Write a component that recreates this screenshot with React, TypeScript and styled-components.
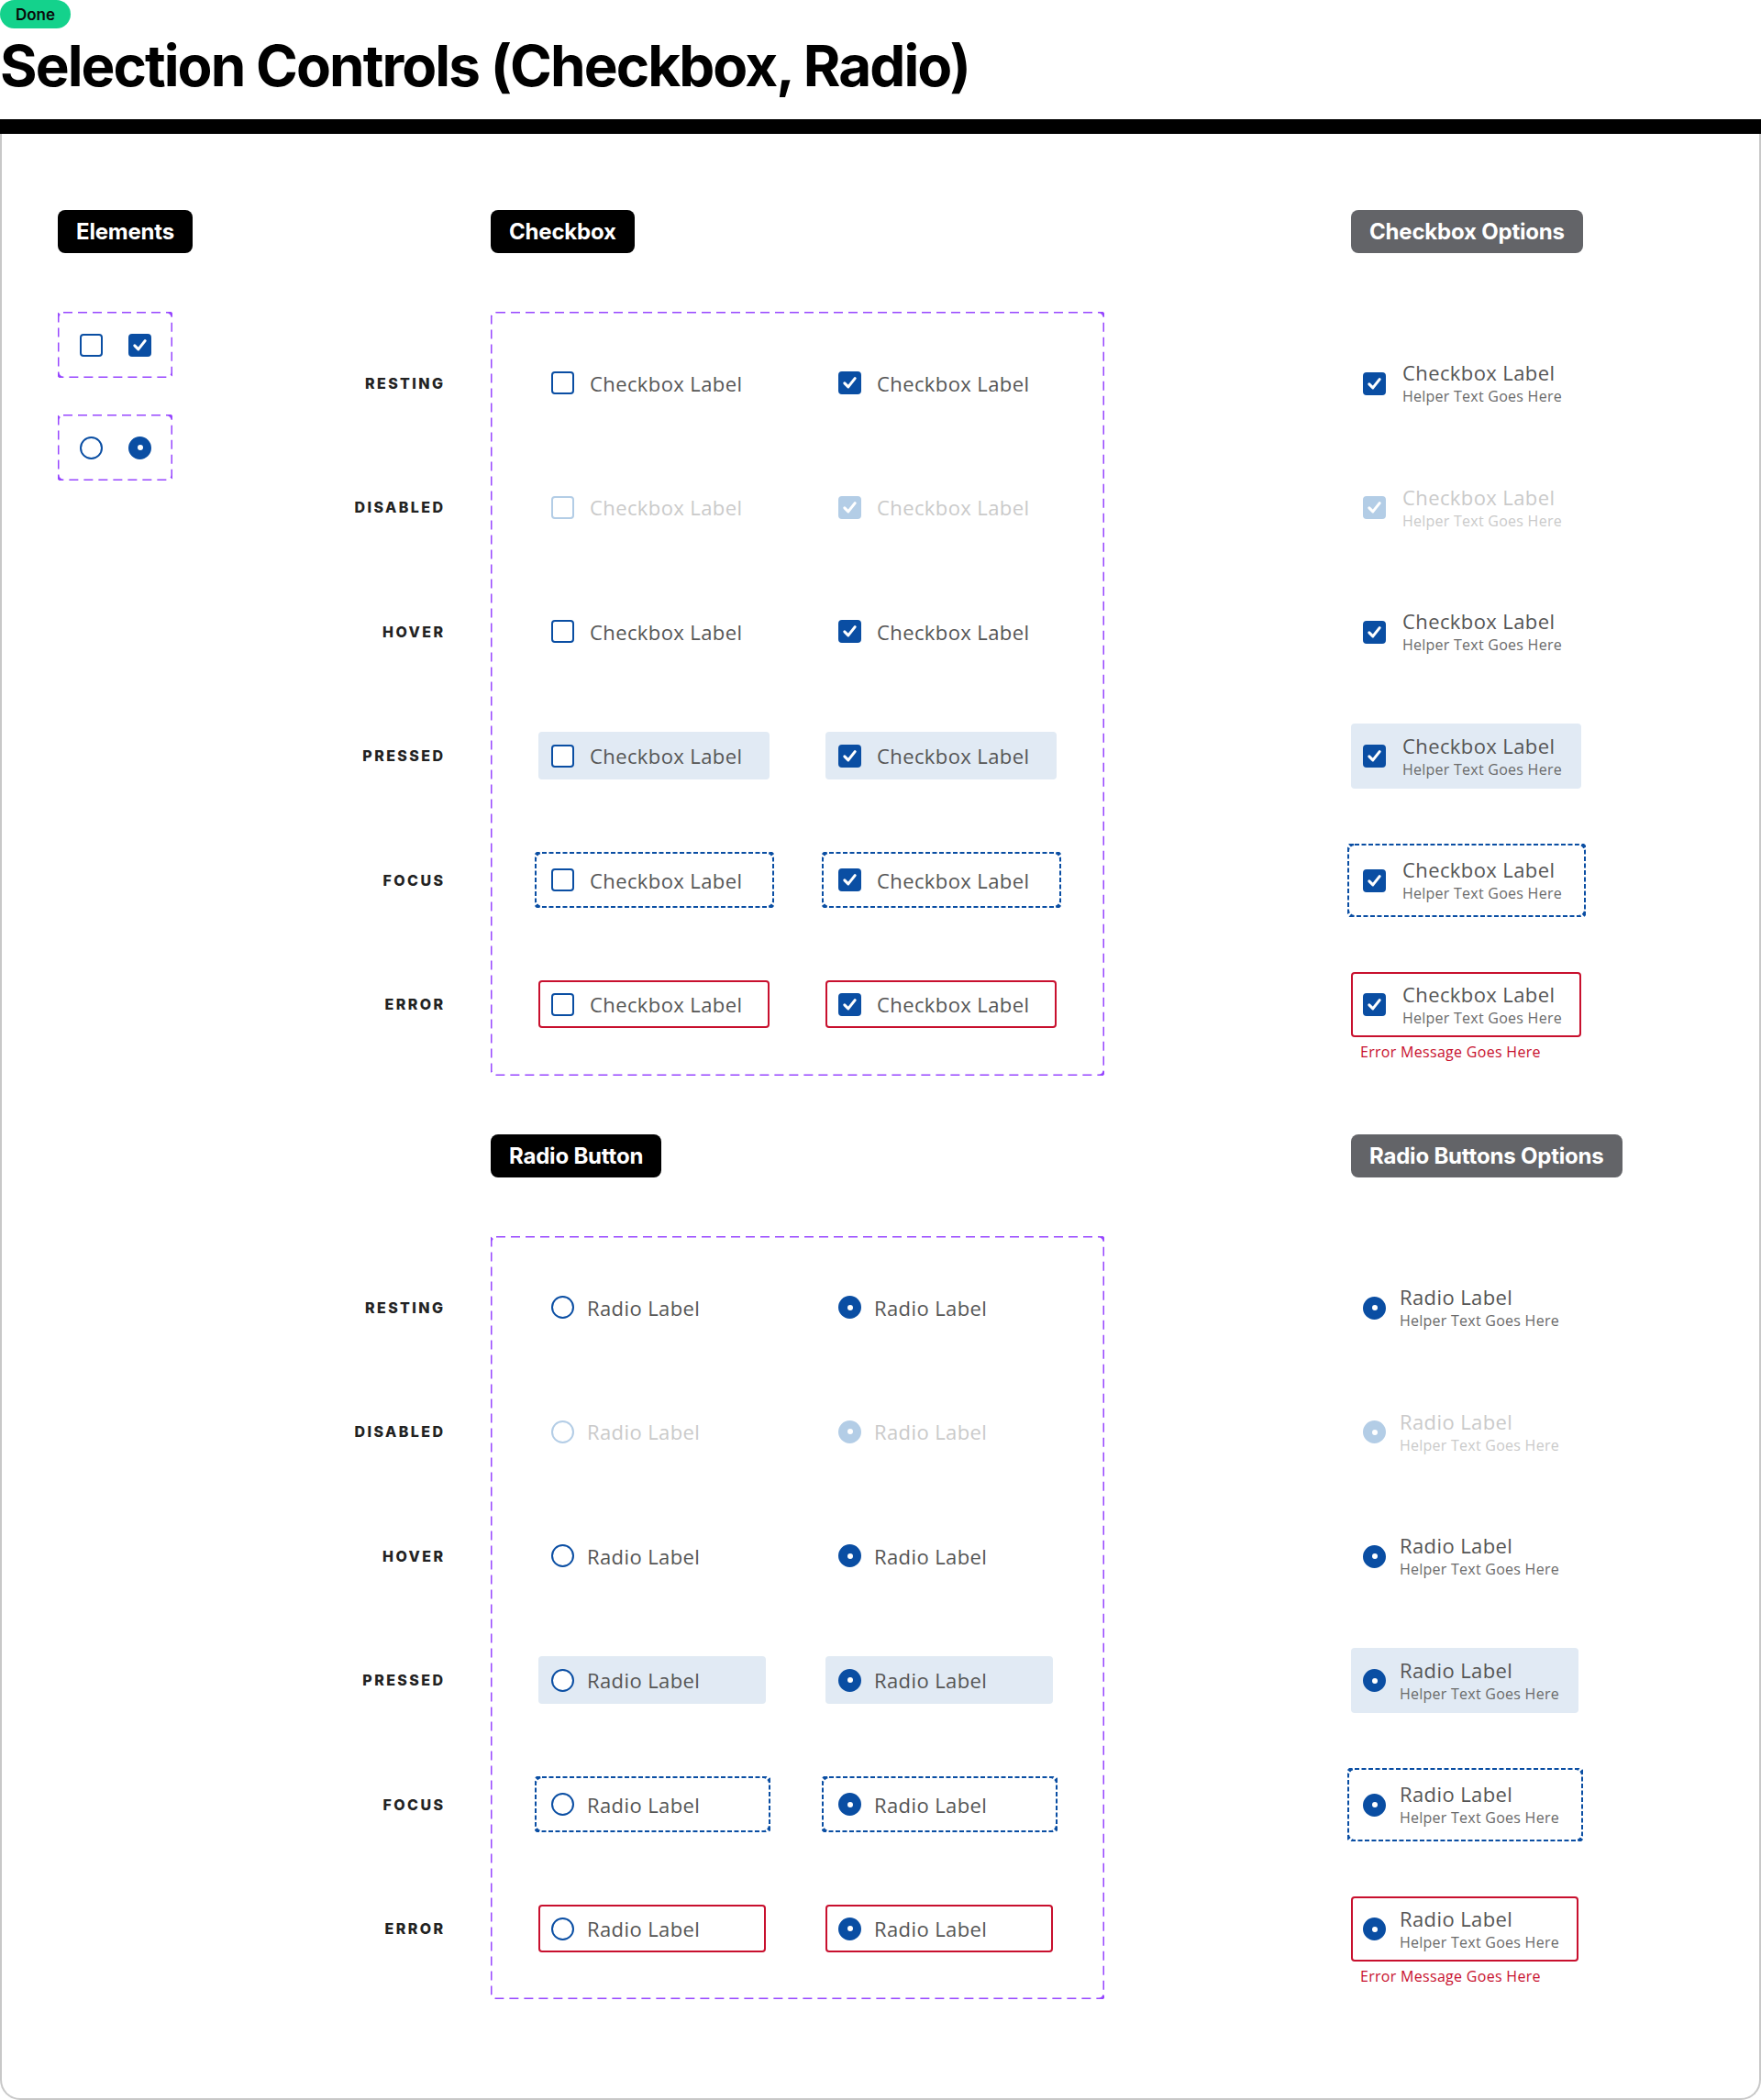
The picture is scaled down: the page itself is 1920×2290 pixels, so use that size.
import React from "react";
import styled, { createGlobalStyle, css } from "styled-components";

const BLUE = "#0a4ea3";
const BLUE_DIS = "#b3cde6";
const RED = "#c8102e";
const PURPLE = "#9747ff";
const TEXT = "#555555";
const HELPER = "#6a6a6a";
const TEXT_DIS = "#cacaca";
const PRESSED_BG = "#e1eaf4";

const dashed = (color: string, w: number, dash: number, gap: number, r: number) =>
  `url("data:image/svg+xml,${encodeURIComponent(
    `<svg xmlns='http://www.w3.org/2000/svg' width='100%' height='100%'><rect width='100%' height='100%' fill='none' rx='${r}' ry='${r}' stroke='${color}' stroke-width='${
      w * 2
    }' stroke-dasharray='${dash} ${gap}'/></svg>`
  )}")`;

const PURPLE_DASH = dashed(PURPLE, 1.5, 10, 6, 6);
const FOCUS_DASH = dashed(BLUE, 2, 5, 2.5, 8);

type State = "resting" | "disabled" | "hover" | "pressed" | "focus" | "error";

const STATES: [string, State][] = [
  ["RESTING", "resting"],
  ["DISABLED", "disabled"],
  ["HOVER", "hover"],
  ["PRESSED", "pressed"],
  ["FOCUS", "focus"],
  ["ERROR", "error"],
];

const Global = createGlobalStyle`
  html, body { margin: 0; padding: 0; background: #fff; }
  body { font-family: "Open Sans", "Noto Sans", sans-serif; }
`;

const Page = styled.div`
  width: 1920px;
  height: 2290px;
  background: #fff;
`;

const Header = styled.header`
  display: flex;
  flex-direction: column;
  align-items: flex-start;
`;

const StatusPill = styled.div`
  width: 77px;
  height: 31px;
  border-radius: 16px;
  background: #14d28c;
  display: flex;
  align-items: center;
  justify-content: center;
  font-family: Inter, "Liberation Sans", sans-serif;
  font-weight: 600;
  font-size: 17px;
  color: #0a0a0a;
`;

const Title = styled.h1`
  margin: 10px 0 0;
  font-family: Inter, "Liberation Sans", sans-serif;
  font-weight: 700;
  font-size: 62px;
  line-height: 62px;
  letter-spacing: -1.95px;
  color: #000;
  white-space: nowrap;
`;

const Rule = styled.div`
  align-self: stretch;
  margin-top: 27px;
  height: 16px;
  background: #000;
`;

const Board = styled.main`
  box-sizing: border-box;
  height: 2144px;
  border: 2px solid #c8c8c8;
  border-top: none;
  border-radius: 0 0 22px 22px;
  padding: 83px 0 0 61px;
`;

const Layout = styled.div`
  display: grid;
  grid-template-columns: 124px 348px 669px 269px 1fr;
  grid-template-rows: 47px 833px 47px 832px;
  row-gap: 64px;
`;

const Badge = styled.div<{ $col: number; $row: number; $muted?: boolean }>`
  grid-column: ${(p) => p.$col};
  grid-row: ${(p) => p.$row};
  justify-self: start;
  align-self: start;
  box-sizing: border-box;
  height: 47px;
  padding: 0 20px;
  display: flex;
  align-items: center;
  border-radius: 8px;
  background: ${(p) => (p.$muted ? "#636468" : "#000")};
  color: #fff;
  font-family: Inter, "Liberation Sans", sans-serif;
  font-weight: 700;
  font-size: 24px;
  letter-spacing: -0.2px;
  white-space: nowrap;
`;

const ElementsColumn = styled.div`
  grid-column: 1;
  grid-row: 2;
  display: flex;
  flex-direction: column;
  gap: 40px;
`;

const ElementBox = styled.div`
  box-sizing: border-box;
  width: 125px;
  height: 72px;
  padding-left: 24px;
  display: flex;
  align-items: center;
  gap: 28px;
  background: ${PURPLE_DASH};
`;

const LabelsColumn = styled.div<{ $row: number }>`
  grid-column: 2;
  grid-row: ${(p) => p.$row};
  display: flex;
  flex-direction: column;
  align-items: flex-end;
  padding: 51.5px 52px 0 0;
  gap: 83.6px;
`;

const RowLabel = styled.div`
  height: 52px;
  display: flex;
  align-items: center;
  margin-right: -2.4px;
  font-family: Inter, "Liberation Sans", sans-serif;
  font-weight: 800;
  font-size: 16px;
  letter-spacing: 2.4px;
  color: #222;
`;

const StateFrame = styled.div<{ $row: number }>`
  grid-column: 3;
  grid-row: ${(p) => p.$row};
  box-sizing: border-box;
  height: 100%;
  padding: 51.5px 51px 51.5px 52px;
  display: grid;
  grid-template-columns: 252px 252px;
  grid-auto-rows: 52px;
  column-gap: 61px;
  row-gap: 83.6px;
  background: ${PURPLE_DASH};
`;

const OptionsColumn = styled.div<{ $row: number }>`
  grid-column: 5;
  grid-row: ${(p) => p.$row};
  display: flex;
  flex-direction: column;
  align-items: flex-start;
  padding-top: 42.5px;
  gap: 64.6px;
`;

const OptionGroup = styled.div`
  display: flex;
  flex-direction: column;
  align-items: flex-start;
`;

const Tile = styled.div<{ $state: State; $w: number; $h: number; $pl: number; $gap: number }>`
  position: relative;
  box-sizing: border-box;
  width: ${(p) => p.$w}px;
  height: ${(p) => p.$h}px;
  padding-left: ${(p) => p.$pl}px;
  display: flex;
  align-items: center;
  gap: ${(p) => p.$gap}px;
  border-radius: 4px;
  background: ${(p) => (p.$state === "pressed" ? PRESSED_BG : "transparent")};
  box-shadow: ${(p) => (p.$state === "error" ? `inset 0 0 0 2px ${RED}` : "none")};
  ${(p) =>
    p.$state === "focus" &&
    css`
      &::after {
        content: "";
        position: absolute;
        inset: -4.5px;
        background: ${FOCUS_DASH};
        pointer-events: none;
      }
    `}
`;

const LabelText = styled.span<{ $disabled?: boolean }>`
  font-size: 22px;
  line-height: 24px;
  letter-spacing: 0.4px;
  color: ${(p) => (p.$disabled ? TEXT_DIS : TEXT)};
  white-space: nowrap;
`;

const TextStack = styled.div`
  display: flex;
  flex-direction: column;
  gap: 4px;
`;

const HelperText = styled.span<{ $disabled?: boolean }>`
  font-size: 16px;
  line-height: 20px;
  letter-spacing: 0.25px;
  color: ${(p) => (p.$disabled ? TEXT_DIS : HELPER)};
  white-space: nowrap;
`;

const ErrorText = styled.span`
  margin: 6px 0 0 10px;
  font-size: 16px;
  line-height: 20px;
  letter-spacing: 0.3px;
  color: ${RED};
  white-space: nowrap;
`;

const BoxShape = styled.span<{ $checked?: boolean; $disabled?: boolean }>`
  flex: none;
  box-sizing: border-box;
  width: 25px;
  height: 25px;
  border-radius: 4px;
  border: 2px solid ${(p) => (p.$disabled ? BLUE_DIS : BLUE)};
  background: ${(p) => (p.$checked ? (p.$disabled ? BLUE_DIS : BLUE) : "#fff")};
  display: flex;
  align-items: center;
  justify-content: center;
`;

const CircleShape = styled.span<{ $checked?: boolean; $disabled?: boolean }>`
  flex: none;
  box-sizing: border-box;
  width: 25px;
  height: 25px;
  border-radius: 50%;
  border: 2px solid ${(p) => (p.$disabled ? BLUE_DIS : BLUE)};
  background: ${(p) => (p.$checked ? (p.$disabled ? BLUE_DIS : BLUE) : "#fff")};
  display: flex;
  align-items: center;
  justify-content: center;
`;

const Dot = styled.span`
  width: 6px;
  height: 6px;
  border-radius: 50%;
  background: #fff;
`;

const Checkbox = ({ checked, disabled }: { checked?: boolean; disabled?: boolean }) => (
  <BoxShape $checked={checked} $disabled={disabled}>
    {checked && (
      <svg width="21" height="21" viewBox="0 0 20 20" fill="none">
        <path
          d="M4.6 10.4 L8.4 14.2 L15.4 5.4"
          stroke="#fff"
          strokeWidth="2.9"
          strokeLinecap="round"
          strokeLinejoin="round"
        />
      </svg>
    )}
  </BoxShape>
);

const Radio = ({ checked, disabled }: { checked?: boolean; disabled?: boolean }) => (
  <CircleShape $checked={checked} $disabled={disabled}>
    {checked && <Dot />}
  </CircleShape>
);

type Kind = "checkbox" | "radio";

const Control = ({ kind, checked, disabled }: { kind: Kind; checked?: boolean; disabled?: boolean }) =>
  kind === "checkbox" ? <Checkbox checked={checked} disabled={disabled} /> : <Radio checked={checked} disabled={disabled} />;

const Section = ({ kind, row }: { kind: Kind; row: number }) => {
  const label = kind === "checkbox" ? "Checkbox Label" : "Radio Label";
  const cellW = kind === "checkbox" ? 252 : 248;
  const gap = kind === "checkbox" ? 17 : 14;
  return (
    <>
      <LabelsColumn $row={row}>
        {STATES.map(([name]) => (
          <RowLabel key={name}>{name}</RowLabel>
        ))}
      </LabelsColumn>
      <StateFrame $row={row}>
        {STATES.map(([, st]) =>
          [false, true].map((checked) => (
            <Tile key={st + String(checked)} $state={st} $w={cellW} $h={52} $pl={14} $gap={gap}>
              <Control kind={kind} checked={checked} disabled={st === "disabled"} />
              <LabelText $disabled={st === "disabled"}>{label}</LabelText>
            </Tile>
          ))
        )}
      </StateFrame>
      <OptionsColumn $row={row}>
        {STATES.map(([, st]) => (
          <OptionGroup key={st}>
            <Tile $state={st} $w={kind === "checkbox" ? 251 : 248} $h={71} $pl={13} $gap={gap + 1}>
              <Control kind={kind} checked disabled={st === "disabled"} />
              <TextStack>
                <LabelText $disabled={st === "disabled"}>{label}</LabelText>
                <HelperText $disabled={st === "disabled"}>Helper Text Goes Here</HelperText>
              </TextStack>
            </Tile>
            {st === "error" && <ErrorText>Error Message Goes Here</ErrorText>}
          </OptionGroup>
        ))}
      </OptionsColumn>
    </>
  );
};

export default function App() {
  return (
    <Page>
      <Global />
      <Header>
        <StatusPill>Done</StatusPill>
        <Title>Selection Controls (Checkbox, Radio)</Title>
        <Rule />
      </Header>
      <Board>
        <Layout>
          <Badge $col={1} $row={1}>Elements</Badge>
          <Badge $col={3} $row={1}>Checkbox</Badge>
          <Badge $col={5} $row={1} $muted>
            Checkbox Options
          </Badge>
          <ElementsColumn>
            <ElementBox>
              <Checkbox />
              <Checkbox checked />
            </ElementBox>
            <ElementBox>
              <Radio />
              <Radio checked />
            </ElementBox>
          </ElementsColumn>
          <Section kind="checkbox" row={2} />
          <Badge $col={3} $row={3}>Radio Button</Badge>
          <Badge $col={5} $row={3} $muted>
            Radio Buttons Options
          </Badge>
          <Section kind="radio" row={4} />
        </Layout>
      </Board>
    </Page>
  );
}
